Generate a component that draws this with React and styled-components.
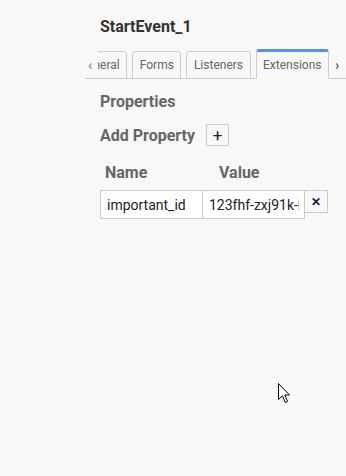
import React from "react";
import styled, { createGlobalStyle } from "styled-components";

const GlobalStyle = createGlobalStyle`
  html, body {
    margin: 0;
    padding: 0;
    background: #f8f8f8;
  }
  body {
    font-family: Roboto, "Liberation Sans", sans-serif;
    width: 346px;
    height: 476px;
    overflow: hidden;
    position: relative;
  }
`;

const Panel = styled.div`
  margin-left: 85px;
  width: 261px;
`;

const Title = styled.div`
  padding: 17px 0 0 15px;
  font-size: 16px;
  font-weight: 700;
  color: #333;
  line-height: 20px;
`;

const TabBar = styled.div`
  display: flex;
  align-items: flex-end;
  margin-top: 12px;
  height: 29px;
  border-bottom: 1px solid #ccc;
`;

const Arrow = styled.div`
  width: ${(p) => p.w}px;
  flex-shrink: 0;
  align-self: center;
  box-sizing: border-box;
  padding: 2px 0 0 ${(p) => p.pad}px;
  font-size: 14px;
  color: ${(p) => p.color};
`;

/* scrolled to the end: the strip is right-aligned and its start is clipped */
const TabViewport = styled.div`
  flex: 1;
  min-width: 0;
  overflow: hidden;
  align-self: stretch;
  display: flex;
  justify-content: flex-end;
  align-items: flex-end;
  margin-bottom: -1px;
`;

const TabStrip = styled.div`
  display: flex;
  flex-shrink: 0;
  align-items: flex-end;
  gap: 5px;
`;

const Tab = styled.div`
  flex-shrink: 0;
  box-sizing: border-box;
  height: ${(p) => (p.active ? 30 : 28)}px;
  padding: 0 6.5px;
  border: 1px solid #ccc;
  border-top: ${(p) => (p.active ? "3px solid #4d90fe" : "1px solid #ccc")};
  border-bottom: ${(p) => (p.active ? "1px solid #f8f8f8" : "1px solid #ccc")};
  border-radius: 3px 3px 0 0;
  background: #f8f8f8;
  display: flex;
  align-items: center;
  font-size: 12px;
  color: #666;
`;

const Section = styled.div`
  padding: 13px 0 0 15px;
`;

const Heading = styled.div`
  font-size: 16px;
  font-weight: 700;
  color: #666;
  line-height: 19px;
`;

const AddRow = styled.div`
  display: flex;
  align-items: center;
  gap: 11px;
  margin-top: 13px;
`;

const IconButton = styled.button`
  box-sizing: border-box;
  width: ${(p) => p.w}px;
  height: ${(p) => p.h}px;
  padding: 0;
  border: 1px solid #ccc;
  border-radius: 0;
  background: #f8f8f8;
  color: #1c1c3a;
  font-family: Roboto, "Liberation Sans", sans-serif;
  font-size: ${(p) => p.fs}px;
  font-weight: ${(p) => p.weight};
  line-height: 1;
  display: flex;
  align-items: center;
  justify-content: center;
`;

const ColHeads = styled.div`
  display: grid;
  grid-template-columns: 114px auto;
  margin-top: 17px;
  padding-left: 5px;
`;

const ColHead = styled.div`
  font-size: 16px;
  font-weight: 700;
  color: #666;
  line-height: 19px;
`;

const EntryRow = styled.div`
  display: flex;
  align-items: flex-start;
  margin-top: 8px;
`;

const Field = styled.input`
  box-sizing: border-box;
  width: 103px;
  height: 29px;
  margin: 0 -1px 0 0;
  padding: 0 5px 0 6px;
  border: 1px solid #ccc;
  background: #fff;
  outline: none;
  font-family: Roboto, "Liberation Sans", sans-serif;
  font-size: 14px;
  color: #222;
`;

const Cursor = styled.svg`
  position: absolute;
  left: 278px;
  top: 383px;
`;

export default function App() {
  return (
    <>
      <GlobalStyle />
      <Panel>
        <Title>StartEvent_1</Title>
        <TabBar>
          <Arrow w={13} pad={3} color="#5a7fb0">‹</Arrow>
          <TabViewport>
            <TabStrip>
              <Tab>General</Tab>
              <Tab>Forms</Tab>
              <Tab>Listeners</Tab>
              <Tab active>Extensions</Tab>
            </TabStrip>
          </TabViewport>
          <Arrow w={17} pad={6} color="#444">›</Arrow>
        </TabBar>
        <Section>
          <Heading>Properties</Heading>
          <AddRow>
            <Heading>Add Property</Heading>
            <IconButton w={23} h={22} fs={17} weight={400}>+</IconButton>
          </AddRow>
          <ColHeads>
            <ColHead>Name</ColHead>
            <ColHead>Value</ColHead>
          </ColHeads>
          <EntryRow>
            <Field defaultValue="important_id" />
            <Field defaultValue="123fhf-zxj91k-lm2" />
            <IconButton w={24} h={23} fs={12} weight={700}>✕</IconButton>
          </EntryRow>
        </Section>
      </Panel>
      <Cursor width="13" height="21" viewBox="0 0 13 21">
        <path
          d="M0.5 0.5 L0.5 16.5 L4.5 12.8 L7.2 19.5 L9.5 18.5 L6.9 12 L11.5 12 Z"
          fill="#fff"
          stroke="#000"
          strokeWidth="1"
        />
      </Cursor>
    </>
  );
}
